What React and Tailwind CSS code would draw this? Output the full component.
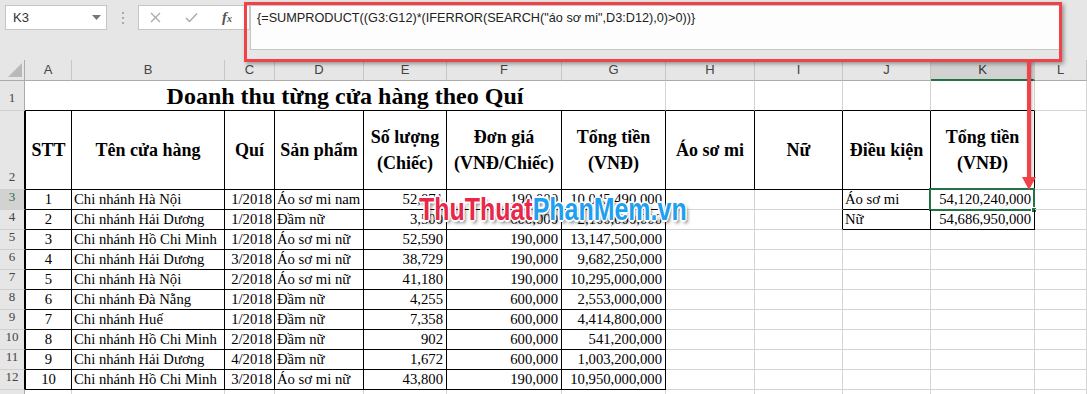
import React from "react";

const COLS = [
  { key: "A", w: "w-[47px]", align: "justify-center" },
  { key: "B", w: "w-[153px]", align: "justify-start pl-[2px]" },
  { key: "C", w: "w-[50px]", align: "justify-end pr-[2px]" },
  { key: "D", w: "w-[89px]", align: "justify-start pl-[2px]" },
  { key: "E", w: "w-[83px]", align: "justify-end pr-[3px]" },
  { key: "F", w: "w-[115px]", align: "justify-end pr-[3px]" },
  { key: "G", w: "w-[104px]", align: "justify-end pr-[3px]" },
  { key: "H", w: "w-[89px]", align: "justify-start pl-[2px]" },
  { key: "I", w: "w-[88px]", align: "justify-start pl-[2px]" },
  { key: "J", w: "w-[88px]", align: "justify-start pl-[2px]" },
  { key: "K", w: "w-[104px]", align: "justify-end pr-[3px]" },
  { key: "L", w: "w-[52px]", align: "justify-start" },
];

const HEAD = [
  "STT",
  "Tên cửa hàng",
  "Quí",
  "Sản phẩm",
  ["Số lượng", "(Chiếc)"],
  ["Đơn giá", "(VNĐ/Chiếc)"],
  ["Tổng tiền", "(VNĐ)"],
  "Áo sơ mi",
  "Nữ",
  "Điều kiện",
  ["Tổng tiền", "(VNĐ)"],
  "",
];

const DATA = [
  ["1", "Chi nhánh Hà Nội", "1/2018", "Áo sơ mi nam", "52,871", "190,000", "10,045,490,000", "", "", "Áo sơ mi", "54,120,240,000"],
  ["2", "Chi nhánh Hải Dương", "1/2018", "Đầm nữ", "3,500", "600,000", "2,100,000,000", "", "", "Nữ", "54,686,950,000"],
  ["3", "Chi nhánh Hồ Chi Minh", "1/2018", "Áo sơ mi nữ", "52,590", "190,000", "13,147,500,000"],
  ["4", "Chi nhánh Hải Dương", "3/2018", "Áo sơ mi nữ", "38,729", "190,000", "9,682,250,000"],
  ["5", "Chi nhánh Hà Nội", "2/2018", "Áo sơ mi nữ", "41,180", "190,000", "10,295,000,000"],
  ["6", "Chi nhánh Đà Nẵng", "1/2018", "Đầm nữ", "4,255", "600,000", "2,553,000,000"],
  ["7", "Chi nhánh Huế", "1/2018", "Đầm nữ", "7,358", "600,000", "4,414,800,000"],
  ["8", "Chi nhánh Hồ Chi Minh", "2/2018", "Đầm nữ", "902", "600,000", "541,200,000"],
  ["9", "Chi nhánh Hải Dương", "4/2018", "Đầm nữ", "1,672", "600,000", "1,003,200,000"],
  ["10", "Chi nhánh Hồ Chi Minh", "3/2018", "Áo sơ mi nữ", "43,800", "190,000", "10,950,000,000"],
];

// which cell edges carry the black table border
const blackRight = (row, c) => {
  if (c === 11 || row === 1 || row > 12) return false;
  if (row === 2) return c <= 10;
  if (c <= 6) return true;
  return row <= 4 && c >= 8 && c <= 10;
};

const blackBottom = (row, c) => {
  if (c === 11 || row > 12) return false;
  if (row <= 2) return c <= 10;
  if (c <= 6) return true;
  return row <= 4 && (c === 9 || c === 10);
};

const RowHead = ({ n, h, active, label = true }) => (
  <div
    className={`w-[25px] ${h} shrink-0 flex items-end justify-center pb-[3px] text-[13px] border-b border-b-[#d0d0d0] border-r overflow-hidden
      ${n === 1 || n > 12 ? "border-r-[#ababab]" : "border-r-black"}
      ${active ? "bg-[#d2d2d2] text-[#217346]" : "bg-[#e6e6e6] text-[#444]"}`}
  >
    {label ? n : null}
  </div>
);

const Cell = ({ row, c, children, extra = "" }) => (
  <div
    className={`${COLS[c].w} h-full shrink-0 flex border-r border-b relative
      ${blackRight(row, c) ? "border-r-black" : "border-r-[#d4d4d4]"}
      ${blackBottom(row, c) ? "border-b-black" : "border-b-[#d4d4d4]"}
      ${c === 0 && row >= 2 && row <= 12 ? "border-l border-l-black" : ""} ${extra}`}
  >
    {children}
  </div>
);

const FormulaBar = () => (
  <div className="h-[60px] bg-[#e6e6e6] flex items-start font-['Liberation_Sans',sans-serif]">
    <div className="ml-[5px] mt-[5px] w-[102px] h-[25px] bg-white border border-[#c6c6c6] flex items-center pl-[7px] pr-[5px] text-[13px] text-[#333]">
      K3
      <svg className="ml-auto" width="9" height="5" viewBox="0 0 9 5">
        <polygon points="0,0 9,0 4.5,5" fill="#777" />
      </svg>
    </div>
    <div className="w-[31px] h-[25px] mt-[5px] flex flex-col items-center justify-center gap-[3px]">
      <span className="w-[2px] h-[2px] bg-[#aaa]" />
      <span className="w-[2px] h-[2px] bg-[#aaa]" />
      <span className="w-[2px] h-[2px] bg-[#aaa]" />
    </div>
    <div className="mt-[5px] w-[112px] h-[25px] bg-white border border-[#c6c6c6] flex items-center">
      <svg className="ml-[11px]" width="11" height="11" viewBox="0 0 11 11">
        <path d="M1 1 L10 10 M10 1 L1 10" stroke="#ababab" strokeWidth="1.3" />
      </svg>
      <svg className="ml-[24px]" width="13" height="11" viewBox="0 0 13 11">
        <path d="M1 6 L4.5 9.5 L12 1.5" stroke="#ababab" strokeWidth="1.5" fill="none" />
      </svg>
      <span className="ml-[24px] text-[15px] italic font-bold text-[#555] font-['Liberation_Serif',serif] leading-none">
        f<span className="text-[10px]">x</span>
      </span>
    </div>
    <div className="mt-[5px] w-[810px] h-[45px] bg-[#fdfdfd] border border-[#c6c6c6] pl-[6px] pt-[3px] text-[12.7px] leading-[18px] text-[#222]">
      {'{=SUMPRODUCT((G3:G12)*(IFERROR(SEARCH("áo sơ mi",D3:D12),0)>0))}'}
    </div>
  </div>
);

const ColumnHeads = () => (
  <div className="h-[21px] flex bg-[#e6e6e6] font-['Liberation_Sans',sans-serif] text-[13px] text-[#444]">
    <div className="w-[25px] h-full shrink-0 border-r border-b border-[#ababab] relative">
      <svg className="absolute left-0 top-0" width="25" height="21" viewBox="0 0 25 21">
        <polygon points="22,3 22,17 8,17" fill="#b9b9b9" />
      </svg>
    </div>
    {COLS.map((col) => (
      <div
        key={col.key}
        className={`${col.w} h-full shrink-0 flex items-center justify-center border-r border-r-[#c6c6c6]
          ${col.key === "K" ? "bg-[#d2d2d2] border-b-2 border-b-[#217346] text-[#333]" : "border-b border-b-[#ababab]"}`}
      >
        {col.key}
      </div>
    ))}
  </div>
);

const App = () => {
  return (
    <div className="relative w-[1087px] h-[394px] overflow-hidden bg-white">
      <FormulaBar />
      <ColumnHeads />

      {/* ── Sheet ── */}
      <div className="font-['Liberation_Serif',serif] text-black">
        {/* row 1 */}
        <div className="h-[30px] flex">
          <RowHead n={1} h="h-[30px]" />
          <div className="w-[641px] h-full shrink-0 border-r border-r-[#d4d4d4] border-b border-b-black flex items-end justify-center">
            <span className="text-[24px] font-bold leading-[28px]">Doanh thu từng cửa hàng theo Quí</span>
          </div>
          {[7, 8, 9, 10, 11].map((c) => (
            <Cell key={c} row={1} c={c} />
          ))}
        </div>

        {/* row 2 */}
        <div className="h-[79px] flex">
          <RowHead n={2} h="h-[79px]" />
          {HEAD.map((t, c) => (
            <Cell key={c} row={2} c={c} extra="items-center justify-center text-center">
              <div className="w-full text-[18px] font-bold leading-[26px]">
                {Array.isArray(t) ? t.map((l) => <div key={l}>{l}</div>) : t}
              </div>
            </Cell>
          ))}
        </div>

        {/* data rows */}
        {DATA.map((d, i) => {
          const row = i + 3;
          return (
            <div key={row} className="h-[20px] flex">
              <RowHead n={row} h="h-[20px]" active={row === 3} />
              {COLS.map((col, c) => (
                <Cell key={c} row={row} c={c} extra={`items-end ${col.align}`}>
                  <span className="text-[14.7px] leading-[19px] whitespace-nowrap">{d[c] ?? ""}</span>
                  {row === 3 && c === 10 && (
                    <div className="absolute -left-[2px] -top-[2px] w-[106px] h-[23px] border-2 border-[#217346]">
                      <div className="absolute -right-[4px] -bottom-[4px] w-[6px] h-[6px] bg-[#217346] border border-white" />
                    </div>
                  )}
                </Cell>
              ))}
            </div>
          );
        })}

        {/* row 13, cut off by the window */}
        <div className="h-[10px] flex">
          <RowHead n={13} h="h-[10px]" label={false} />
          {COLS.map((col, c) => (
            <Cell key={c} row={13} c={c} />
          ))}
        </div>
      </div>

      {/* ── Red callout ── */}
      <div className="absolute left-[244px] top-[2px] w-[818px] h-[60px] border-[3px] border-[#f04348] shadow-[2px_2px_4px_rgba(0,0,0,0.35)]" />
      <div className="absolute left-[1027px] top-[61px] w-[4px] h-[118px] bg-[#f04348] shadow-[1px_1px_3px_rgba(0,0,0,0.3)]" />
      <svg className="absolute left-[1022px] top-[177px]" width="14" height="13" viewBox="0 0 14 13">
        <polygon points="0,0 14,0 7,13" fill="#f04348" />
      </svg>

      {/* ── Watermark ── */}
      <div className="absolute left-[419px] top-[193px] origin-left scale-x-[0.78] whitespace-nowrap font-['Liberation_Sans',sans-serif] font-bold text-[32px] leading-none [text-shadow:1px_1px_0_#fff,-1px_-1px_0_#fff,1px_-1px_0_#fff,-1px_1px_0_#fff,2px_0_0_#fff,0_2px_0_#fff,-2px_0_0_#fff,0_-2px_0_#fff,3px_3px_4px_rgba(0,0,0,0.55)]">
        <span className="text-[#e8284b]">ThuThuat</span>
        <span className="text-[#1f9ff0]">PhanMem.vn</span>
      </div>
    </div>
  );
};

export default App;
